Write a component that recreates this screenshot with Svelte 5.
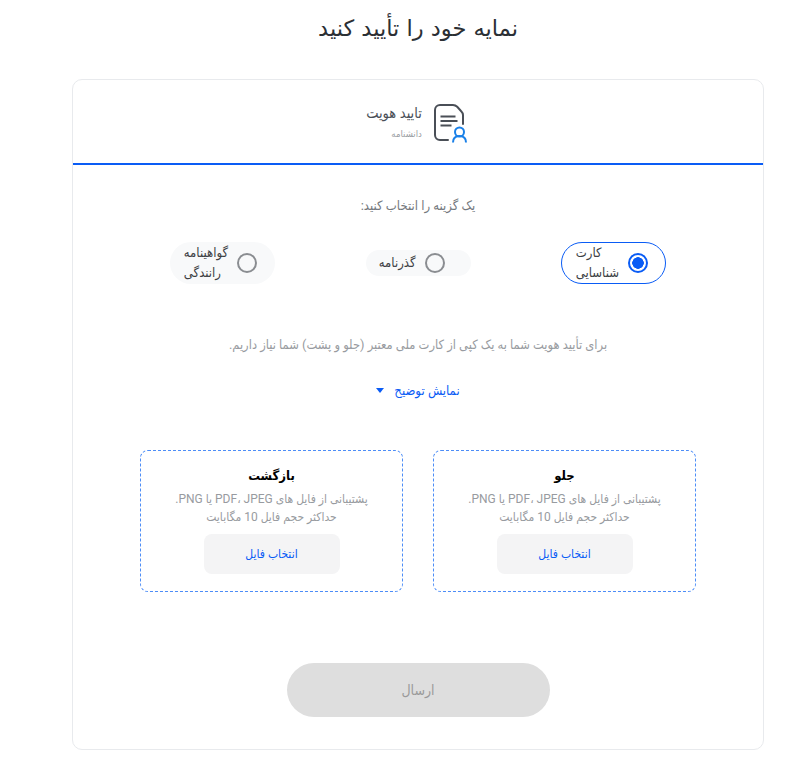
<script>
  const options = [
    { id: 'card', label: 'کارت شناسایی', wide: false },
    { id: 'passport', label: 'گذرنامه', wide: true },
    { id: 'license', label: 'گواهینامه رانندگی', wide: false }
  ];
  let selected = $state('card');
  const sides = ['جلو', 'بازگشت'];
</script>

<main dir="rtl">
  <h1>نمایه خود را تأیید کنید</h1>
  <section class="card">
    <header>
      <svg class="doc" width="34" height="39" viewBox="0 0 34 39" fill="none">
        <path d="M14 36H6a5 5 0 0 1-5-5V6a5 5 0 0 1 5-5h13c2 0 3 .6 4.200 1.800l4 4.400C28.400 8.400 29 9.500 29 11v9" stroke="#4a4f57" stroke-width="2" stroke-linecap="round"/>
        <path d="M6.500 12.500h15M6.500 17h17M6.500 21.500h11" stroke="#4a4f57" stroke-width="2"/>
        <circle cx="25.500" cy="28" r="4.500" stroke="#1a80e8" stroke-width="2"/>
        <path d="M19 38.500c0-4.500 2.500-6.500 6.500-6.500s6.500 2 6.500 6.500" stroke="#1a80e8" stroke-width="2"/>
      </svg>
      <div class="step">
        <span class="step-title">تایید هویت</span>
        <span class="step-sub">دانشنامه</span>
      </div>
    </header>
    <div class="body">
      <p class="prompt">یک گزینه را انتخاب کنید:</p>
      <div class="options">
        {#each options as o}
          <button class="option" class:active={selected === o.id} class:wide={o.wide} onclick={() => (selected = o.id)}>
            <span class="radio"></span>
            <span class="option-label">{o.label}</span>
          </button>
        {/each}
      </div>
      <p class="hint">برای تأیید هویت شما به یک کپی از کارت ملی معتبر (جلو و پشت) شما نیاز داریم.</p>
      <button class="toggle"><span>نمایش توضیح</span><i></i></button>
      <div class="uploads">
        {#each sides as s}
          <div class="upload">
            <h2>{s}</h2>
            <p>پشتیبانی از فایل های PDF، JPEG یا PNG.<br />حداکثر حجم فایل 10 مگابایت</p>
            <button>انتخاب فایل</button>
          </div>
        {/each}
      </div>
      <button class="submit" disabled>ارسال</button>
    </div>
  </section>
</main>

<style>
  :global(body) {
    margin: 0;
    background: #fff;
    font-family: Roboto, "DejaVu Sans Condensed", "DejaVu Sans", sans-serif;
  }

  main {
    width: 809px;
    height: 777px;
    overflow: hidden;
    padding: 0 45px 0 72px;
    box-sizing: border-box;
  }

  h1 {
    margin: 11px 0 34px;
    font-family: "DejaVu Sans", sans-serif;
    font-size: 22.500px;
    line-height: 34px;
    font-weight: 400;
    color: #2b2f34;
    text-align: center;
  }

  .card {
    height: 671px;
    border: 1px solid #e8eaed;
    border-radius: 10px;
    box-sizing: border-box;
  }

  header {
    height: 83px;
    display: flex;
    align-items: center;
    justify-content: center;
    gap: 12px;
    border-bottom: 2px solid #0a5cf5;
    padding-right: 2px;
  }

  .doc {
    margin-top: 3px;
  }

  .step {
    display: flex;
    flex-direction: column;
    gap: 6px;
  }

  .step-title {
    font-size: 14.500px;
    color: #4a4f57;
  }

  .step-sub {
    font-size: 9.500px;
    color: #9a9ea3;
  }

  .body {
    display: flex;
    flex-direction: column;
    align-items: center;
  }

  .prompt {
    margin: 33px 0 28px;
    font-size: 13px;
    line-height: 16px;
    color: #74787d;
  }

  .options {
    width: 496px;
    display: flex;
    justify-content: space-between;
    align-items: center;
  }

  .option {
    width: 105px;
    height: 42px;
    display: flex;
    align-items: center;
    gap: 9px;
    padding: 0 17px 0 15px;
    border: 1px solid transparent;
    border-radius: 21px;
    background: #f8f9fa;
    box-sizing: border-box;
    font: inherit;
    color: #3c4043;
  }

  .option.wide {
    height: 26px;
    padding-right: 25px;
  }

  .option.active {
    background: #fff;
    border-color: #0a5cf5;
  }

  .radio {
    flex: none;
    width: 20px;
    height: 20px;
    border: 2px solid #8a8d91;
    border-radius: 50%;
    box-sizing: border-box;
  }

  .active .radio {
    border-color: #0a5cf5;
    background: radial-gradient(circle, #0a5cf5 0 5.500px, #fff 6px);
  }

  .option-label {
    font-size: 13px;
    line-height: 20px;
    text-align: left;
  }

  .hint {
    margin: 51px 0 0;
    font-size: 12.800px;
    line-height: 20px;
    color: #989ba0;
  }

  .toggle {
    margin-top: 27px;
    display: flex;
    align-items: center;
    gap: 10px;
    border: 0;
    background: none;
    font: inherit;
    font-size: 13px;
    color: #0a5cf5;
  }

  .toggle i {
    width: 0;
    height: 0;
    border: 4px solid transparent;
    border-top: 5px solid #0a5cf5;
    border-bottom: 0;
  }

  .uploads {
    margin-top: 51px;
    display: flex;
    gap: 30px;
  }

  .upload {
    width: 263px;
    height: 142px;
    box-sizing: border-box;
    padding-top: 17px;
    border: 1px dashed #4d8df7;
    border-radius: 8px;
    text-align: center;
  }

  .upload h2 {
    margin: 0;
    font-size: 13px;
    line-height: 16px;
    color: #000;
  }

  .upload p {
    margin: 6px 0 8px;
    font-size: 12px;
    line-height: 18px;
    color: #989ba0;
  }

  .upload button {
    width: 136px;
    height: 40px;
    border: 0;
    border-radius: 8px;
    background: #f4f4f5;
    font: inherit;
    font-size: 12px;
    color: #0a5cf5;
  }

  .submit {
    margin-top: 71px;
    width: 263px;
    height: 54px;
    border: 0;
    border-radius: 27px;
    background: #dedede;
    font: inherit;
    font-size: 14px;
    color: #9a9a9a;
  }
</style>
